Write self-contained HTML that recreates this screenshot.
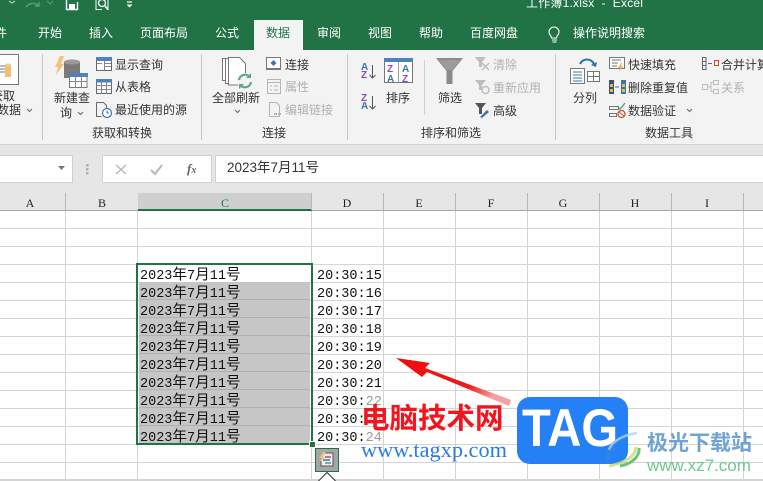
<!DOCTYPE html>
<html lang="zh"><head><meta charset="utf-8">
<style>
html,body{margin:0;padding:0}
body{width:763px;height:481px;overflow:hidden;position:relative;background:#fff;font-family:"Liberation Sans","Noto Sans CJK SC",sans-serif;font-size:12px;color:#333}
.a{position:absolute;white-space:nowrap;line-height:16px}
.b{position:absolute}
.tab{color:#fff;top:25px}
.d{color:#b1b1b1}
.g{position:absolute;background:#d4d4d4}
.dt{position:absolute;left:140px;font:13.5px/18px "Liberation Mono","WenQuanYi Zen Hei",monospace;color:#111;white-space:nowrap}
.dt i{font:normal 14.6px/18px "WenQuanYi Zen Hei","Noto Sans CJK SC",sans-serif}
.tm{position:absolute;left:317px;font:13.5px/18px "Liberation Mono",monospace;color:#111}
.ch{position:absolute;top:195px;font:12px/16px "Liberation Serif",serif;color:#222;width:20px;text-align:center}
svg{position:absolute;overflow:visible}
</style></head><body>
<!-- title bar -->
<div class="b" style="left:0;top:0;width:763px;height:50px;background:#217346"></div>
<svg style="left:0;top:0" width="140" height="20" fill="none" stroke="#fff">
<path d="M9 1l3 2 3-2" stroke="#cfe0d6"/><path d="M26 7c3-4 9-5 13-1M39 2v4h-4" stroke="#5f9a7b" stroke-width="1.4"/><path d="M47 1l3 3 3-3" stroke="#5f9a7b"/>
<path d="M66.500 0v9.500h11V2" stroke-width="1.4"/><path d="M69 4h6v5h-6z" fill="#fff" stroke="none"/>
<path d="M96 0v9.500h6M108 0v9.500h-1" stroke-width="1"/><circle cx="102" cy="3" r="3.500" stroke-width="1.3"/><path d="M105 6l3 3.500" stroke-width="1.600"/>
<path d="M127 2h5" stroke-width="1.200"/><path d="M126.500 4.500h6l-3 3z" fill="#fff" stroke="none"/>
</svg>
<div class="a" style="left:526px;top:-5px;color:#fff;letter-spacing:.2px">工作簿1.xlsx &nbsp;- &nbsp;Excel</div>
<!-- tabs -->
<div class="a tab" style="left:-17px">文件</div>
<div class="a tab" style="left:38px">开始</div>
<div class="a tab" style="left:89px">插入</div>
<div class="a tab" style="left:140px">页面布局</div>
<div class="a tab" style="left:215px">公式</div>
<div class="b" style="left:254px;top:20px;width:49px;height:30px;background:#f3f3f3"></div>
<div class="a tab" style="left:266px;color:#217346">数据</div>
<div class="a tab" style="left:317px">审阅</div>
<div class="a tab" style="left:368px">视图</div>
<div class="a tab" style="left:419px">帮助</div>
<div class="a tab" style="left:470px">百度网盘</div>
<svg style="left:546px;top:26px" width="16" height="18" fill="none" stroke="#fff" stroke-width="1.100"><path d="M5.500 12c0-2.500-2.500-3-2.500-6a5 5 0 0 1 10 0c0 3-2.500 3.500-2.500 6zM6 14h5M6.500 16h4"/></svg>
<div class="a tab" style="left:573px">操作说明搜索</div>
<!-- ribbon -->
<div class="b" style="left:0;top:50px;width:763px;height:94px;background:#f3f3f3;border-bottom:1px solid #d2d2d2;box-sizing:content-box"></div>
<div class="b" style="left:42px;top:54px;width:1px;height:86px;background:#c6c6c6"></div>
<div class="b" style="left:201px;top:54px;width:1px;height:86px;background:#c6c6c6"></div>
<div class="b" style="left:347px;top:54px;width:1px;height:86px;background:#c6c6c6"></div>
<div class="b" style="left:555px;top:54px;width:1px;height:86px;background:#c6c6c6"></div>
<div class="b" style="left:424px;top:60px;width:1px;height:55px;background:#d0d0d0"></div>
<!-- 获取数据 -->
<svg style="left:0;top:54px" width="20" height="32"><path d="M-2 .500h20.500v30H-2z" fill="#fff" stroke="#777"/><path d="M0 12h5M0 15h5M0 18h5" stroke="#777"/><path d="M5 11h6v12H5z" fill="#f0c070"/><ellipse cx="8" cy="11" rx="3" ry="1.500" fill="#eccb94"/></svg>
<div class="a" style="left:-9px;top:88px">获取</div>
<div class="a" style="left:-3px;top:102px">数据</div>
<svg style="left:26px;top:108px" width="8" height="6" fill="none" stroke="#666"><path d="M1 1l2.500 2.500L6 1"/></svg>
<!-- new query -->
<svg style="left:54px;top:55px" width="36" height="36"><path d="M6 1h4L7 9h3L2 20l2-8H1z" fill="#f2c27c"/><path d="M10 7c0-3 16-3 16 0v16H10z" fill="#7a7a7a"/><ellipse cx="18" cy="7" rx="8" ry="2.500" fill="#9a9a9a"/><path d="M15.500 18.500h17.500v14H15.500z" fill="#fff" stroke="#777"/><path d="M15 18h19v4H15z" fill="#4f81bd"/><path d="M15.500 26.500h18M21.500 22v11M27.500 22v11" stroke="#888"/></svg>
<div class="a" style="left:54px;top:90px">新建查</div>
<div class="a" style="left:60px;top:105px">询</div>
<svg style="left:77px;top:111px" width="8" height="6" fill="none" stroke="#666"><path d="M1 1l2.500 2.500L6 1"/></svg>
<svg style="left:96px;top:57px" width="17" height="15" fill="#fff"><path d="M.5.500h15v13H.5z" stroke="#666"/><path d="M0 0h16v4H0z" fill="#4f81bd"/><path d="M9 6.500h6M9 9.500h6M8.500 4v9M1 6.500h5" stroke="#888" fill="none"/></svg>
<div class="a" style="left:115px;top:57px">显示查询</div>
<svg style="left:96px;top:79px" width="17" height="16" fill="#fff"><path d="M.5.500h15v14H.5z" stroke="#666"/><path d="M0 0h16v3.500H0z" fill="#4f81bd"/><path d="M0 6.500h16M0 10.500h16M5.500 3v12M10.500 3v12" stroke="#888" fill="none"/></svg>
<div class="a" style="left:115px;top:79px">从表格</div>
<svg style="left:96px;top:102px" width="17" height="16" fill="none"><path d="M.5.500h7l3 3v5M.5.500v14h5" stroke="#666"/><circle cx="11" cy="11" r="4.500" fill="#fff" stroke="#3a75b0" stroke-width="1.200"/><path d="M11 8.500V11h2" stroke="#3a75b0"/></svg>
<div class="a" style="left:115px;top:102px">最近使用的源</div>
<div class="a" style="left:92px;top:125px">获取和转换</div>
<!-- refresh -->
<svg style="left:222px;top:57px" width="32" height="34" fill="#fff" stroke="#777"><path d="M.5 1.500h13v22H.5z"/><path d="M3.500 1.500h13v25h-13z"/><path d="M6.500.500h11l6 6V28h-17z"/><circle cx="23" cy="24" r="8" fill="#f3f3f3" stroke="none"/><path d="M17 23a6 6 0 0 1 11-2.500M29 25a6 6 0 0 1-11 2.500" fill="none" stroke="#5fa58c" stroke-width="2.200"/><path d="M29 16v5h-5zM17 32v-5h5z" fill="#5fa58c" stroke="none"/></svg>
<div class="a" style="left:212px;top:90px">全部刷新</div>
<svg style="left:234px;top:109px" width="8" height="6" fill="none" stroke="#666"><path d="M1 1l2.500 2.500L6 1"/></svg>
<svg style="left:266px;top:57px" width="16" height="14" fill="none"><path d="M.5.500h14v11H.5z" fill="#fff" stroke="#777"/><path d="M0 12.500h15" stroke="#777"/><path d="M7.500 3l3 3-3 3-3-3z" fill="#3a75b0"/></svg>
<div class="a" style="left:285px;top:57px">连接</div>
<svg style="left:267px;top:79px" width="14" height="15" fill="none" stroke="#b5b5b5"><path d="M.5.500h13v14H.5zM0 3.500h14"/><path d="M3 7h2M7 7h4M3 11h2M7 11h4"/></svg>
<div class="a d" style="left:285px;top:79px">属性</div>
<svg style="left:269px;top:102px" width="14" height="16" fill="none" stroke="#b5b5b5"><path d="M.5.500h7l3 3v11H.5z"/><path d="M5 12h3M9 12h3" stroke-width="2"/></svg>
<div class="a d" style="left:285px;top:102px">编辑链接</div>
<div class="a" style="left:262px;top:125px">连接</div>
<!-- sort -->
<div class="a" style="left:361px;top:63px;font-size:10px;line-height:10px;color:#3a75b0;font-weight:bold">A</div>
<div class="a" style="left:361px;top:71px;font-size:10px;line-height:10px;color:#8e4db0;font-weight:bold">Z</div>
<svg style="left:369px;top:65px" width="8" height="15" fill="none" stroke="#555"><path d="M3.500 0v13M.5 10l3 3 3-3"/></svg>
<div class="a" style="left:361px;top:94px;font-size:10px;line-height:10px;color:#8e4db0;font-weight:bold">Z</div>
<div class="a" style="left:361px;top:102px;font-size:10px;line-height:10px;color:#3a75b0;font-weight:bold">A</div>
<svg style="left:369px;top:96px" width="8" height="15" fill="none" stroke="#555"><path d="M3.500 0v13M.5 10l3 3 3-3"/></svg>
<svg style="left:384px;top:58px" width="30" height="26"><path d="M.5.500h28v24H.5z" fill="#fff" stroke="#777"/><path d="M0 0h29v4H0z" fill="#4f81bd"/><path d="M14.500 4v20" stroke="#999"/><text x="3" y="14" font-size="10" font-weight="bold" fill="#8e4db0" font-family="Liberation Sans">Z</text><text x="3" y="24" font-size="10" font-weight="bold" fill="#3a75b0" font-family="Liberation Sans">A</text><text x="18" y="14" font-size="10" font-weight="bold" fill="#3a75b0" font-family="Liberation Sans">A</text><text x="18" y="24" font-size="10" font-weight="bold" fill="#8e4db0" font-family="Liberation Sans">Z</text></svg>
<div class="a" style="left:386px;top:90px">排序</div>
<svg style="left:436px;top:58px" width="28" height="27"><path d="M0 0h27L16.500 13v13h-6V13z" fill="#8a8a8a"/><path d="M3 2h21l-8 10H11z" fill="#9c9c9c"/></svg>
<div class="a" style="left:438px;top:90px">筛选</div>
<svg style="left:475px;top:57px" width="16" height="15"><path d="M0 0h11L7 5v5H4V5z" fill="#bdbdbd"/><path d="M7 6l7 7M14 6l-7 7" stroke="#bdbdbd" stroke-width="1.400"/></svg>
<div class="a d" style="left:493px;top:57px">清除</div>
<svg style="left:475px;top:80px" width="16" height="15" fill="none"><path d="M0 0h11L7 5v5H4V5z" fill="#bdbdbd"/><circle cx="10.500" cy="10" r="3.500" stroke="#bdbdbd" stroke-width="1.500"/></svg>
<div class="a d" style="left:493px;top:80px">重新应用</div>
<svg style="left:475px;top:103px" width="16" height="16" fill="none"><path d="M0 0h11L7 5v6H4V5z" fill="#555"/><path d="M5 14l7-7 2 2-7 6z" fill="#3a75b0"/></svg>
<div class="a" style="left:493px;top:103px">高级</div>
<div class="a" style="left:421px;top:125px">排序和筛选</div>
<!-- data tools -->
<svg style="left:570px;top:57px" width="32" height="27" fill="none"><path d="M.5 11.500h14v15H.5z" fill="#fff" stroke="#777"/><path d="M3 15h9M3 18h9M3 21h9M3 24h9" stroke="#3a75b0"/><path d="M17.500 14.500h12v10h-12zM17.500 19.500h12M23.500 14.500v10" stroke="#777" fill="#fff"/><path d="M10 7c3-6 11-6 14 0" stroke="#2f6fb0" stroke-width="2"/><path d="M21 8l5 2 1-5z" fill="#2f6fb0"/></svg>
<div class="a" style="left:573px;top:90px">分列</div>
<svg style="left:609px;top:57px" width="17" height="16" fill="none"><path d="M.5.500h15v11H.5z" fill="#fff" stroke="#777"/><path d="M3 3h9M3 6h6M3 9h5" stroke="#777"/><path d="M12 6l-3 5h2l-1 4 4-6h-2l1-3z" fill="#f2b04a"/></svg>
<div class="a" style="left:628px;top:57px">快速填充</div>
<svg style="left:609px;top:80px" width="17" height="15"><path d="M0 0h5v14H0z" fill="#3e4f6d"/><path d="M12 0h5v14h-5z" fill="#3a75b0"/><path d="M1 4h3v3H1zM1 9h3v3H1zM13 4h3v3h-3zM13 9h3v3h-3z" fill="#e8b858"/><path d="M6 7h4" stroke="#3a75b0"/></svg>
<div class="a" style="left:628px;top:80px">删除重复值</div>
<svg style="left:609px;top:102px" width="17" height="16" fill="none"><path d="M.5 4.500h9v3h-9zM.5 11.500h7v3h-7z" stroke="#777"/><path d="M8 4l3 3 5-6" stroke="#5a9a78" stroke-width="1.300"/><circle cx="12.500" cy="12" r="3.500" fill="#fff" stroke="#d0492f" stroke-width="1.300"/><path d="M10 10l5 4" stroke="#d0492f"/></svg>
<div class="a" style="left:628px;top:103px">数据验证</div>
<svg style="left:686px;top:108px" width="8" height="6" fill="none" stroke="#666"><path d="M1 1l2.500 2.500L6 1"/></svg>
<svg style="left:702px;top:57px" width="17" height="14" fill="none"><path d="M.5.500h3.500v12H.500zM.5 4.500h3.500M.5 8.500h3.500" stroke="#666"/><path d="M6 6.500h4" stroke="#3a75b0"/><path d="M12.500 3.500h4v5h-4z" stroke="#d0492f"/></svg>
<div class="a" style="left:721px;top:57px">合并计算</div>
<svg style="left:702px;top:80px" width="17" height="15" fill="none" stroke="#bdbdbd"><path d="M.5 4.500h5v5h-5zM11.500.500h5v4h-5zM11.500 9.500h5v4h-5zM5.500 7H9V2.500h2.500M9 7v4.500h2.500"/></svg>
<div class="a d" style="left:721px;top:80px">关系</div>
<div class="a" style="left:645px;top:125px">数据工具</div>
<!-- formula bar -->
<div class="b" style="left:0;top:145px;width:763px;height:65px;background:#e6e6e6"></div>
<div class="b" style="left:-2px;top:155px;width:73px;height:26px;background:#fff;border:1px solid #d0d0d0"></div>
<svg style="left:58px;top:166px" width="8" height="5"><path d="M0 0h7l-3.500 4z" fill="#777"/></svg>
<svg style="left:86px;top:164px" width="3" height="11"><path d="M0 0h2.500v2.500H0zM0 4h2.500v2.500H0zM0 8h2.500v2.500H0z" fill="#b0b0b0"/></svg>
<div class="b" style="left:102px;top:155px;width:108px;height:26px;background:#fff;border:1px solid #d0d0d0"></div>
<svg style="left:115px;top:164px" width="13" height="12" fill="none" stroke="#b8b8b8" stroke-width="1.400"><path d="M1 1l10 9M11 1L1 10"/></svg>
<svg style="left:150px;top:164px" width="14" height="12" fill="none" stroke="#b8b8b8" stroke-width="2"><path d="M1 6l4 4 7-9"/></svg>
<div class="a" style="left:187px;top:160px;font:italic bold 13px/18px 'Liberation Serif',serif;color:#666">f<span style="font-size:10px">x</span></div>
<div class="b" style="left:215px;top:155px;width:550px;height:26px;background:#fff;border:1px solid #d0d0d0"></div>
<div class="a" style="left:227px;top:160px;font-size:13.500px;color:#333">2023年7月11号</div>
<!-- headers -->
<div class="b" style="left:138px;top:193px;width:174px;height:16px;background:#cfcfcf"></div>
<div class="b" style="left:0;top:209.500px;width:763px;height:1px;background:#a8a8a8"></div>
<div class="b" style="left:138px;top:209px;width:174px;height:2px;background:#217346"></div>
<div class="ch" style="left:20px">A</div><div class="ch" style="left:92px">B</div><div class="ch" style="left:215px;color:#217346">C</div><div class="ch" style="left:337px">D</div><div class="ch" style="left:409px">E</div><div class="ch" style="left:481px">F</div><div class="ch" style="left:553px">G</div><div class="ch" style="left:625px">H</div><div class="ch" style="left:697px">I</div>
<div class="g" style="left:65px;top:193px;width:1px;height:17px;background:#b8b8b8"></div>
<div class="g" style="left:311px;top:193px;width:1px;height:17px;background:#b8b8b8"></div>
<div class="g" style="left:383px;top:193px;width:1px;height:17px;background:#b8b8b8"></div>
<div class="g" style="left:455px;top:193px;width:1px;height:17px;background:#b8b8b8"></div>
<div class="g" style="left:527px;top:193px;width:1px;height:17px;background:#b8b8b8"></div>
<div class="g" style="left:599px;top:193px;width:1px;height:17px;background:#b8b8b8"></div>
<div class="g" style="left:671px;top:193px;width:1px;height:17px;background:#b8b8b8"></div>
<div class="g" style="left:743px;top:193px;width:1px;height:17px;background:#b8b8b8"></div>
<!-- grid -->
<div class="b" style="left:0;top:211px;width:763px;height:270px;background-image:repeating-linear-gradient(to bottom,transparent 0,transparent 17px,#d4d4d4 17px,#d4d4d4 18px)"></div>
<div class="g" style="left:65px;top:211px;width:1px;height:270px"></div>
<div class="g" style="left:137px;top:211px;width:1px;height:270px"></div>
<div class="g" style="left:311px;top:211px;width:1px;height:270px"></div>
<div class="g" style="left:383px;top:211px;width:1px;height:270px"></div>
<div class="g" style="left:455px;top:211px;width:1px;height:270px"></div>
<div class="g" style="left:527px;top:211px;width:1px;height:270px"></div>
<div class="g" style="left:599px;top:211px;width:1px;height:270px"></div>
<div class="g" style="left:671px;top:211px;width:1px;height:270px"></div>
<div class="g" style="left:743px;top:211px;width:1px;height:270px"></div>
<div class="b" style="left:0;top:479px;width:763px;height:2px;background:#d4d4d4"></div>
<!-- selection -->
<div class="b" style="left:139px;top:282px;width:171px;height:161px;background:#c6c6c6;background-image:repeating-linear-gradient(to bottom,transparent 0,transparent 17px,#b0b0b0 17px,#b0b0b0 18px)"></div>
<div class="b" style="left:136px;top:263px;width:173px;height:178px;border:2px solid #217346"></div>
<div class="b" style="left:309px;top:441px;width:5px;height:5px;background:#217346;border:1px solid #fff;box-sizing:content-box"></div>
<div class="dt" style="top:265px">2023<i>年</i>7<i>月</i>11<i>号</i></div>
<div class="dt" style="top:283px">2023<i>年</i>7<i>月</i>11<i>号</i></div>
<div class="dt" style="top:301px">2023<i>年</i>7<i>月</i>11<i>号</i></div>
<div class="dt" style="top:319px">2023<i>年</i>7<i>月</i>11<i>号</i></div>
<div class="dt" style="top:337px">2023<i>年</i>7<i>月</i>11<i>号</i></div>
<div class="dt" style="top:355px">2023<i>年</i>7<i>月</i>11<i>号</i></div>
<div class="dt" style="top:373px">2023<i>年</i>7<i>月</i>11<i>号</i></div>
<div class="dt" style="top:391px">2023<i>年</i>7<i>月</i>11<i>号</i></div>
<div class="dt" style="top:409px">2023<i>年</i>7<i>月</i>11<i>号</i></div>
<div class="dt" style="top:427px">2023<i>年</i>7<i>月</i>11<i>号</i></div>
<div class="tm" style="top:268px">20:30:15</div>
<div class="tm" style="top:286px">20:30:16</div>
<div class="tm" style="top:304px">20:30:17</div>
<div class="tm" style="top:322px">20:30:18</div>
<div class="tm" style="top:340px">20:30:19</div>
<div class="tm" style="top:358px">20:30:20</div>
<div class="tm" style="top:376px">20:30:21</div>
<div class="tm" style="top:394px">20:30:<span style="color:#999">22</span></div>
<div class="tm" style="top:412px">20:30:<span style="color:#999">23</span></div>
<div class="tm" style="top:430px">20:30:<span style="color:#999">24</span></div>
<!-- quick analysis -->
<div class="b" style="left:315px;top:448px;width:22px;height:22px;background:#a6a6a6;border:1px solid #217346"></div>
<svg style="left:319px;top:452px" width="16" height="16"><path d="M5 1h9v13H2V7z" fill="#eee" stroke="#555"/><path d="M6 5h6" stroke="#c0504d" stroke-width="1.500"/><path d="M4 8h7" stroke="#3a75b0" stroke-width="1.500"/><path d="M6 11h6" stroke="#4f9a94" stroke-width="1.500"/><path d="M4 0h3L4 5h2L1 10l1-4H0z" fill="#e8c27c"/></svg>
<svg style="left:318px;top:472px" width="20" height="9"><path d="M.5 9L9 .500 17.500 9" fill="#fff" stroke="#333"/></svg>
<!-- arrow -->
<svg style="left:390px;top:350px" width="130" height="60"><defs><linearGradient id="ag" x1="0" y1="0" x2="1" y2="0.450"><stop offset="0" stop-color="#ee0c0c"/><stop offset=".75" stop-color="#ef1a1a"/><stop offset="1" stop-color="#f5a0a0"/></linearGradient></defs><path d="M6 8L40 13 35 18 121 50 119 56 37 22 32 27Z" fill="url(#ag)"/></svg>
<!-- watermark -->
<div class="a" style="left:361px;top:402px;font:bold 28.500px/30px 'Noto Sans CJK SC',sans-serif;color:#f1151d">电脑技术网</div>
<div class="a" style="left:361px;top:438px;font:22.300px/24px 'Liberation Serif',serif;color:#2a7be6">www.tagxp.com</div>
<div class="b" style="left:517px;top:397px;width:111px;height:67px;border-radius:13px;background:#2680f5"></div>
<div class="a" style="left:522px;top:399px;font:bold 53px/60px 'Liberation Sans',sans-serif;color:#fff;transform:scaleX(.89);transform-origin:left top">TAG</div>
<svg style="left:604px;top:430px" width="50" height="42" fill="none"><path d="M5 36c16-3 27-10 27-19" stroke="#c8dc70" stroke-width="3" opacity=".8"/><path d="M5 20c2-8 14-15 28-17" stroke="#a8d4f0" stroke-width="2.500" opacity=".8"/><path d="M5 30c-3-6 1-11 7-12" stroke="#3a8ad0" stroke-width="3" opacity=".6"/><path d="M16 36c12-2 20-10 19-18" stroke="#70c080" stroke-width="3"/></svg>
<div class="a" style="left:647px;top:429px;font:bold 21px/26px 'Noto Sans CJK SC',sans-serif;color:#6fa3d4">极光下载站</div>
<div class="a" style="left:647px;top:455px;font:17px/22px 'Liberation Sans',sans-serif;color:#6fc78e">www.xz7.com</div>
</body></html>
